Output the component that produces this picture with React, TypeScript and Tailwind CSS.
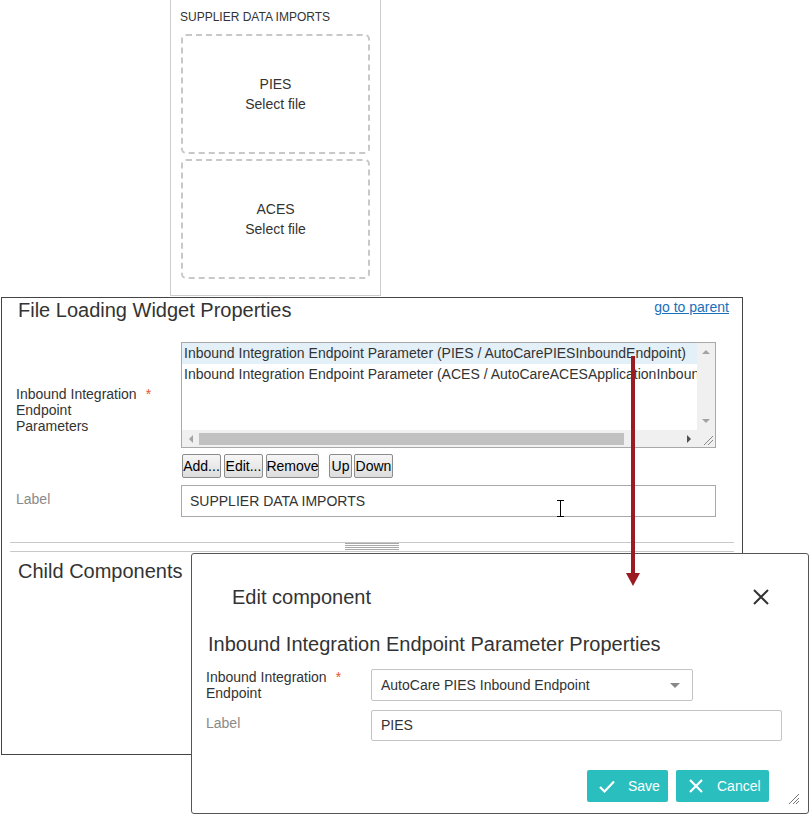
import React from "react";

function DropBox({ name }: { name: string }) {
  return (
    <div className="h-[120px] border-2 border-dashed border-[#c8c8c8] rounded-[5px] flex flex-col items-center justify-center text-[14px] leading-[20px] text-[#333]">
      <div>{name}</div>
      <div>Select file</div>
    </div>
  );
}

function Btn({ w, children }: { w: string; children: React.ReactNode }) {
  return (
    <div
      className={`${w} h-[24px] flex items-center justify-center border border-[#8c8c8c] rounded-[2px] bg-gradient-to-b from-[#f6f6f6] to-[#dddddd] text-[14px] text-black leading-[16px]`}
    >
      {children}
    </div>
  );
}

export default function App() {
  return (
    <div className="relative w-[809px] h-[814px] overflow-hidden bg-white text-[#333] font-['Liberation_Sans',Arial,sans-serif]">
      {/* Top widget preview */}
      <div className="ml-[170px] w-[211px] h-[296px] border-x border-b border-[#cccccc] pt-[10px]">
        <div className="pl-[9px] text-[12px] leading-[14px]">SUPPLIER DATA IMPORTS</div>
        <div className="mt-[10px] ml-[10px] w-[189px] flex flex-col gap-[5px]">
          <DropBox name="PIES" />
          <DropBox name="ACES" />
        </div>
      </div>

      {/* Main properties panel */}
      <div className="mt-px ml-px w-[742px] h-[458px] border border-[#444]">
        <div className="flex justify-between items-start">
          <div className="pl-[16px] text-[20px] leading-[24px]">File Loading Widget Properties</div>
          <a className="mt-[1px] mr-[13px] text-[14px] leading-[16px] text-[#1a70b9] underline">go to parent</a>
        </div>

        <div className="mt-[20px] flex">
          <div className="w-[179px] pl-[14px] self-center text-[14px] leading-[16px]">
            Inbound Integration<span className="ml-[9px] text-[#e8542b]">*</span>
            <br />
            Endpoint
            <br />
            Parameters
          </div>
          <div>
            <div className="w-[535px] h-[106px] border border-[#a9a9a9] flex flex-col">
              <div className="flex h-[87px]">
                <div className="w-[515px] overflow-hidden whitespace-nowrap text-[14px]">
                  <div className="bg-[#e4f0f8] pl-[2px] h-[21px] leading-[21px]">
                    Inbound Integration Endpoint Parameter (PIES / AutoCarePIESInboundEndpoint)
                  </div>
                  <div className="pl-[2px] h-[21px] leading-[21px]">
                    Inbound Integration Endpoint Parameter (ACES / AutoCareACESApplicationInboundEndpoint)
                  </div>
                </div>
                <div className="w-[18px] bg-[#f0f0f0] flex flex-col items-center justify-between pt-[7px] pb-[7px]">
                  <svg width="8" height="4" viewBox="0 0 8 4">
                    <polygon points="0,4 8,4 4,0" fill="#a3a3a3" />
                  </svg>
                  <svg width="8" height="4" viewBox="0 0 8 4">
                    <polygon points="0,0 8,0 4,4" fill="#a3a3a3" />
                  </svg>
                </div>
              </div>
              <div className="flex h-[17px]">
                <div className="w-[515px] bg-[#f0f0f0] flex items-center">
                  <div className="w-[17px] flex justify-center">
                    <svg width="4" height="8" viewBox="0 0 4 8">
                      <polygon points="4,0 4,8 0,4" fill="#a3a3a3" />
                    </svg>
                  </div>
                  <div className="w-[425px] h-[12px] bg-[#c1c1c1]" />
                  <div className="flex-1" />
                  <div className="w-[17px] flex justify-center">
                    <svg width="4" height="8" viewBox="0 0 4 8">
                      <polygon points="0,0 0,8 4,4" fill="#505050" />
                    </svg>
                  </div>
                </div>
                <div className="w-[18px] bg-[#f0f0f0] flex items-end justify-end pr-[2px] pb-[2px]">
                  <svg width="10" height="10" viewBox="0 0 10 10">
                    <line x1="1" y1="10" x2="10" y2="1" stroke="#888" strokeWidth="1" />
                    <line x1="5" y1="10" x2="10" y2="5" stroke="#888" strokeWidth="1" />
                  </svg>
                </div>
              </div>
            </div>
            <div className="mt-[6px] ml-[1px] flex">
              <Btn w="w-[39px]">Add...</Btn>
              <div className="w-[3px]" />
              <Btn w="w-[39px]">Edit...</Btn>
              <div className="w-[3px]" />
              <Btn w="w-[53px]">Remove</Btn>
              <div className="w-[10px]" />
              <Btn w="w-[23px]">Up</Btn>
              <div className="w-[2px]" />
              <Btn w="w-[39px]">Down</Btn>
            </div>
          </div>
        </div>

        <div className="mt-[7px] flex">
          <div className="w-[179px] pl-[14px] pt-[6px] text-[14px] leading-[16px] text-[#8a8a8a]">Label</div>
          <div className="w-[535px] h-[32px] border border-[#a9a9a9] pl-[8px] flex items-center text-[14px]">
            SUPPLIER DATA IMPORTS
          </div>
        </div>

        <div className="mt-[25px] ml-[8px] w-[724px] h-[10px] border-t border-b border-[#c8c8c8] flex justify-center">
          <div className="w-[54px] flex flex-col">
            <div className="h-px bg-[#a8a8a8]" />
            <div className="h-px" />
            <div className="h-px bg-[#a8a8a8]" />
            <div className="h-px" />
            <div className="h-px bg-[#a8a8a8]" />
            <div className="h-px" />
            <div className="h-px bg-[#a8a8a8]" />
          </div>
        </div>

        <div className="mt-[7px] pl-[16px] text-[20px] leading-[24px]">Child Components</div>
      </div>

      {/* I-beam cursor */}
      <svg className="absolute left-[556px] top-[500px]" width="9" height="17" viewBox="0 0 9 17">
        <path d="M1 0.5 H8 M4.5 1 V16 M1 16.5 H8" stroke="#000" strokeWidth="1" fill="none" />
      </svg>

      {/* Edit dialog */}
      <div className="absolute left-[191px] top-[553px] w-[618px] h-[261px] border border-[#555] rounded-[3px] bg-white">
        <div className="flex justify-between items-center pt-[31px] pl-[40px] pr-[39px]">
          <div className="text-[20px] leading-[24px]">Edit component</div>
          <svg width="16" height="16" viewBox="0 0 16 16">
            <path d="M1 1 L15 15 M15 1 L1 15" stroke="#333" strokeWidth="2" />
          </svg>
        </div>
        <div className="mt-[23px] pl-[16px] text-[20px] leading-[24px]">
          Inbound Integration Endpoint Parameter Properties
        </div>
        <div className="mt-[13px] pl-[14px] flex">
          <div className="w-[165px] text-[14px] leading-[16px]">
            Inbound Integration<span className="ml-[9px] text-[#e8542b]">*</span>
            <br />
            Endpoint
          </div>
          <div className="w-[322px] h-[32px] border border-[#c4c4c4] rounded-[2px] pl-[9px] pr-[12px] flex items-center justify-between text-[14px]">
            <span>AutoCare PIES Inbound Endpoint</span>
            <svg width="10" height="5" viewBox="0 0 10 5">
              <polygon points="0,0 10,0 5,5" fill="#888" />
            </svg>
          </div>
        </div>
        <div className="mt-[9px] pl-[14px] flex">
          <div className="w-[165px] pt-[5px] text-[14px] leading-[16px] text-[#8a8a8a]">Label</div>
          <div className="w-[411px] h-[31px] border border-[#c4c4c4] rounded-[2px] pl-[9px] flex items-center text-[14px]">
            PIES
          </div>
        </div>
        <div className="mt-[29px] pr-[39px] flex justify-end gap-[8px]">
          <div className="w-[81px] h-[32px] rounded-[2px] bg-[#2abebe] flex items-center pl-[12px] text-white text-[14px]">
            <svg width="16" height="13" viewBox="0 0 16 13">
              <path d="M1 7 L5.5 11.5 L15 1.5" stroke="#fff" strokeWidth="2.2" fill="none" />
            </svg>
            <span className="ml-[13px]">Save</span>
          </div>
          <div className="w-[93px] h-[32px] rounded-[2px] bg-[#2abebe] flex items-center pl-[13px] text-white text-[14px]">
            <svg width="14" height="14" viewBox="0 0 14 14">
              <path d="M1 1 L13 13 M13 1 L1 13" stroke="#fff" strokeWidth="2.2" />
            </svg>
            <span className="ml-[14px]">Cancel</span>
          </div>
        </div>
        <svg className="absolute right-[9px] bottom-[9px]" width="11" height="11" viewBox="0 0 11 11">
          <line x1="1" y1="11" x2="11" y2="1" stroke="#777" strokeWidth="1" />
          <line x1="5" y1="11" x2="11" y2="5" stroke="#777" strokeWidth="1" />
          <line x1="8" y1="11" x2="11" y2="8" stroke="#777" strokeWidth="1" />
        </svg>
      </div>

      {/* Red arrow */}
      <div className="absolute left-[631px] top-[356px] w-[4px] h-[220px] bg-[#9b1b22]" />
      <svg className="absolute left-[626px] top-[573px]" width="14" height="13" viewBox="0 0 14 13">
        <polygon points="0,0 14,0 7,13" fill="#9b1b22" />
      </svg>
    </div>
  );
}
